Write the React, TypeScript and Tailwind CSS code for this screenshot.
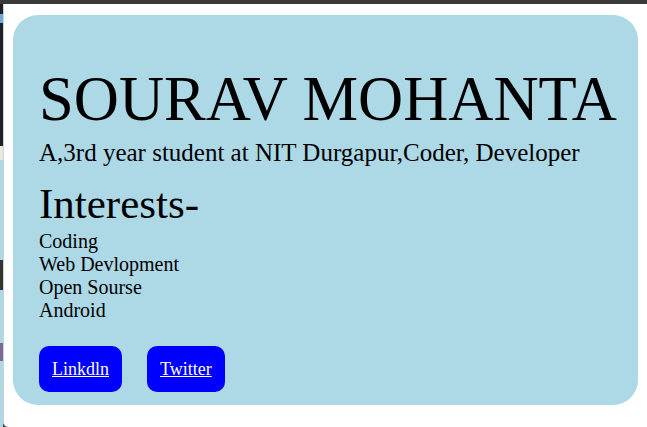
import React from 'react';

const INTERESTS = ['Coding', 'Web Devlopment', 'Open Sourse', 'Android'];

const LINKS = [
  { label: 'Linkdln', href: '#' },
  { label: 'Twitter', href: '#' },
];

export default function App() {
  return (
    <div className="w-[647px] h-[427px] overflow-hidden flex flex-col bg-[#3a3a3a] font-['Liberation_Serif','Times_New_Roman',serif] text-black">
      {/* top strip of the host window */}
      <div className="h-[4px] shrink-0 bg-[#3a3a3a]" />

      <div className="flex flex-1 min-h-0">
        {/* sliver of the page behind the popup */}
        <div className="w-[3px] shrink-0 flex flex-col">
          <div className="h-[10px] bg-[#202124]" />
          <div className="h-[9px] bg-[#6fa8dc]" />
          <div className="h-[123px] bg-[#202124]" />
          <div className="h-[14px] bg-[#e8e8e8]" />
          <div className="h-[100px] bg-[#add8e6]" />
          <div className="h-[30px] bg-[#333]" />
          <div className="h-[53px] bg-[#add8e6]" />
          <div className="h-[18px] bg-[#7a6a9a]" />
          <div className="flex-1 bg-[#add8e6]" />
        </div>

        {/* popup body */}
        <div className="flex-1 bg-white rounded-bl-[5px] border-l border-[#d0d0d0] pl-[9px] pr-[9px] pt-[11px]">
          <div className="h-[390px] bg-[#add8e6] rounded-[25px] pl-[26px] pt-[49px]">
            <h1 className="text-[62.5px] leading-[71px] whitespace-nowrap">SOURAV MOHANTA</h1>
            <p className="mt-[3px] text-[25px] leading-[29px] whitespace-nowrap">
              A,3rd year student at NIT Durgapur,Coder, Developer
            </p>
            <h2 className="mt-[12px] text-[43px] leading-[49px]">Interests-</h2>
            <ul className="mt-[2px] text-[20px] leading-[23px]">
              {INTERESTS.map((item) => (
                <li key={item}>{item}</li>
              ))}
            </ul>
            <div className="mt-[24px] flex gap-[25px]">
              {LINKS.map(({ label, href }) => (
                <a
                  key={label}
                  href={href}
                  className="h-[46px] px-[13px] flex items-center rounded-[10px] bg-[#0000ff] text-white underline text-[18px]"
                >
                  {label}
                </a>
              ))}
            </div>
          </div>
        </div>
      </div>
    </div>
  );
}
